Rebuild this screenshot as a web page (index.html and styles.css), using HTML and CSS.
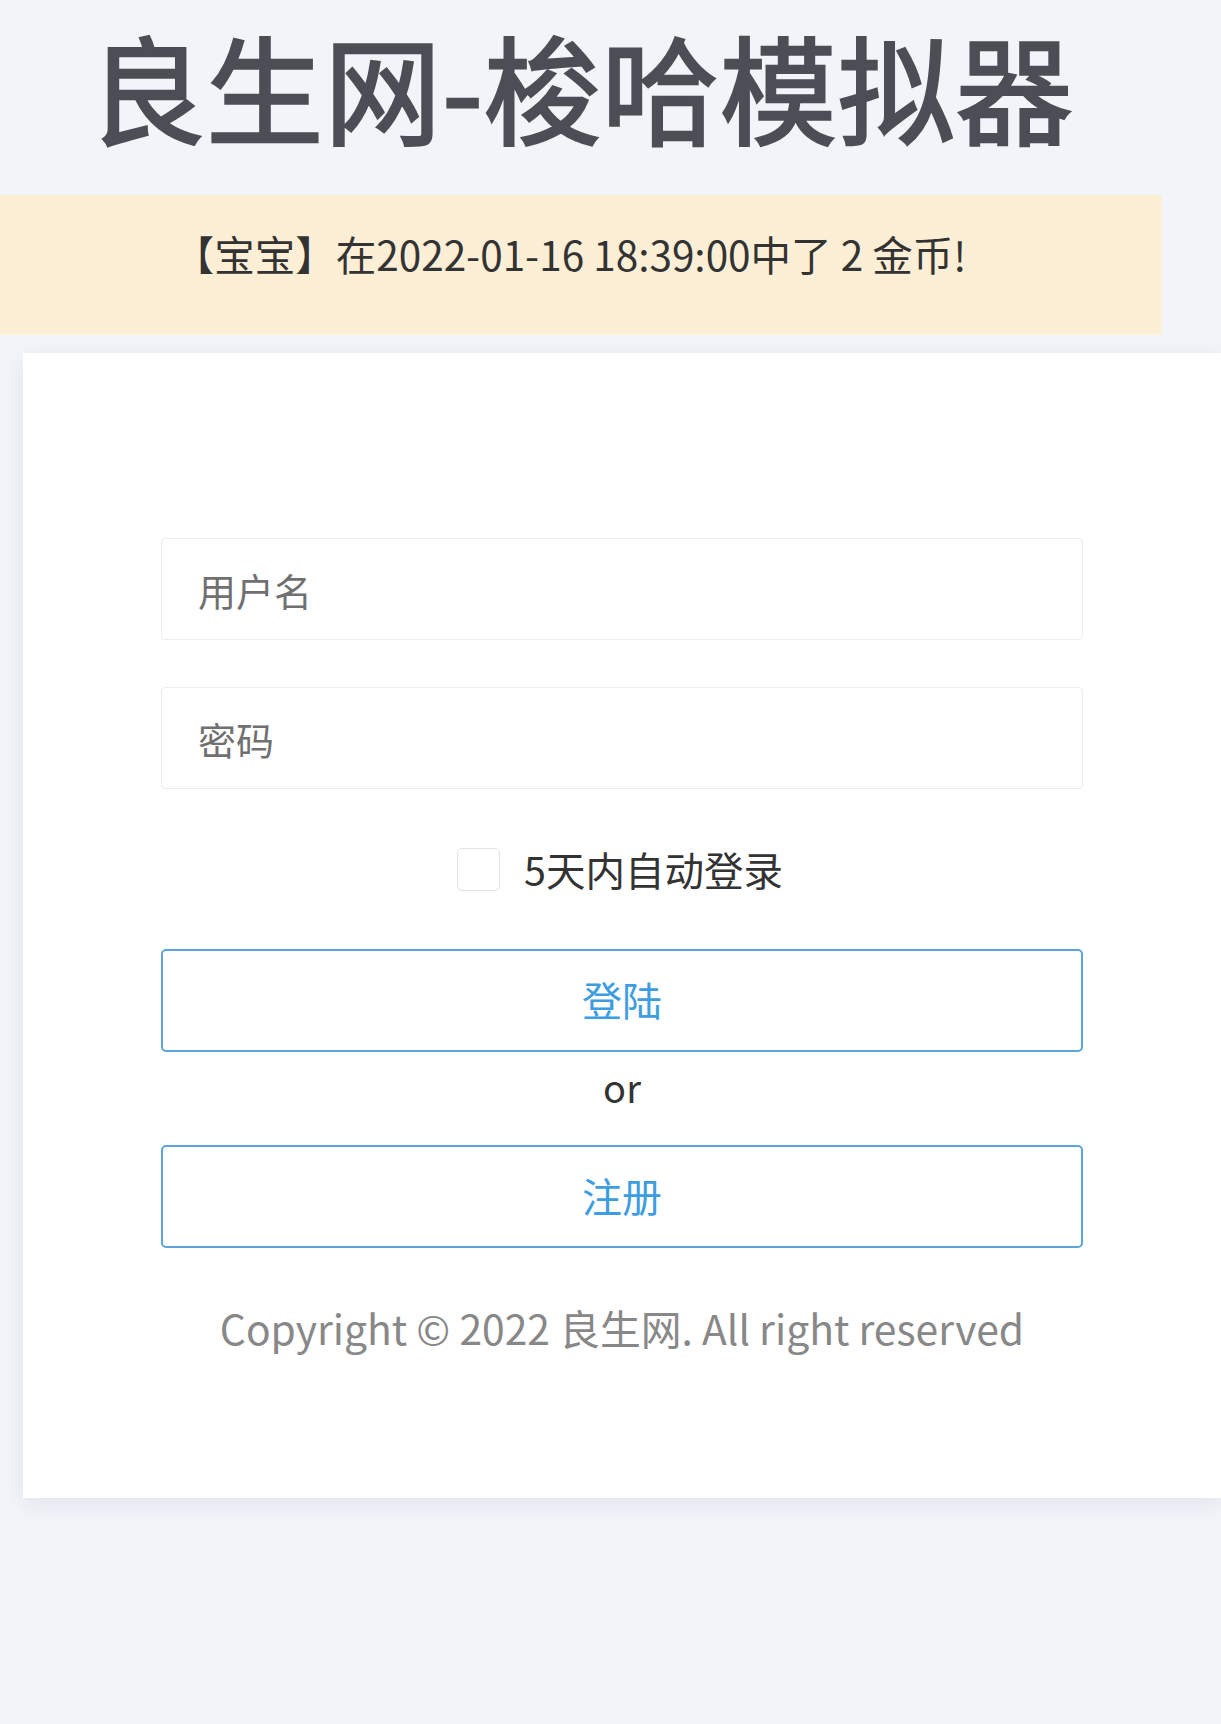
FILE: index.html
```html
<!DOCTYPE html>
<html lang="zh-CN">
<head>
<meta charset="utf-8">
<title>良生网-梭哈模拟器</title>
<link rel="stylesheet" href="styles.css">
</head>
<body>
  <header class="top">
    <h1 class="title">良生网-梭哈模拟器</h1>
    <div class="notice">【宝宝】在2022-01-16 18:39:00中了 2 金币!</div>
  </header>
  <main class="card">
    <form class="form">
      <input class="field" type="text" placeholder="用户名">
      <input class="field field-pass" type="password" placeholder="密码">
      <label class="remember">
        <input class="check" type="checkbox">
        <span class="remember-text">5天内自动登录</span>
      </label>
      <button class="btn" type="button">登陆</button>
      <div class="or">or</div>
      <button class="btn" type="button">注册</button>
      <p class="copy">Copyright © 2022 良生网. All right reserved</p>
    </form>
  </main>
</body>
</html>
```

FILE: styles.css
```css
html, body {
  margin: 0;
  padding: 0;
}

body {
  background: #f1f4f9;
  font-family: "Noto Sans CJK SC", "Noto Sans", sans-serif;
  color: #333;
  overflow-x: hidden;
  min-height: 1724px;
}

.top {
  width: 1162px;
}

.title {
  margin: 0 0 25px 0;
  padding: 0;
  line-height: 170px;
  font-size: 117px;
  font-weight: 400;
  -webkit-text-stroke: 2.5px #4b4f55;
  color: #4b4f55;
  text-align: center;
  letter-spacing: 1px;
  white-space: nowrap;
}

.notice {
  height: 140px;
  box-sizing: border-box;
  padding: 0 22px 24px 0;
  background: #fdefd6;
  display: flex;
  align-items: center;
  justify-content: center;
  font-size: 40.5px;
  color: #333;
}

.card {
  margin: 18px 0 0 23px;
  width: 1198px;
  background: #fff;
  box-shadow: 0 6px 22px rgba(30, 40, 70, 0.07);
  box-sizing: border-box;
  padding: 185px 138px 145px;
}

.form {
  display: flex;
  flex-direction: column;
  margin: 0;
}

.field {
  display: block;
  box-sizing: border-box;
  width: 100%;
  height: 102px;
  margin: 0;
  border: 1px solid #ececec;
  border-radius: 4px;
  padding: 0 0 0 36px;
  font-family: inherit;
  font-size: 38px;
  color: #333;
  background: #fff;
  outline: none;
}

.field::placeholder {
  color: #707070;
}

.field-pass {
  margin-top: 47px;
}

.remember {
  margin-top: 59px;
  display: flex;
  align-items: center;
  justify-content: center;
  gap: 24px;
  height: 42px;
}

.check {
  appearance: none;
  -webkit-appearance: none;
  margin: 0 0 0 -4px;
  width: 43px;
  height: 43px;
  border: 1px solid #e2e2e2;
  border-radius: 5px;
  background: #fff;
  box-sizing: border-box;
}

.remember-text {
  font-size: 39.5px;
  color: #333;
  line-height: 42px;
}

.btn {
  display: block;
  width: 100%;
  height: 103px;
  margin: 59px 0 0 0;
  box-sizing: border-box;
  border: 2.5px solid #5ba5da;
  border-radius: 5px;
  background: #fff;
  font-family: inherit;
  font-size: 40px;
  color: #3d9de0;
  padding: 0 0 4px 0;
}

.or {
  height: 93px;
  box-sizing: border-box;
  padding-bottom: 24px;
  display: flex;
  align-items: center;
  justify-content: center;
  font-size: 38px;
  color: #333;
}

.or + .btn {
  margin-top: 0;
}

.copy {
  margin: 55px 0 0 0;
  line-height: 50px;
  text-align: center;
  font-size: 40.8px;
  color: #888;
}
```
